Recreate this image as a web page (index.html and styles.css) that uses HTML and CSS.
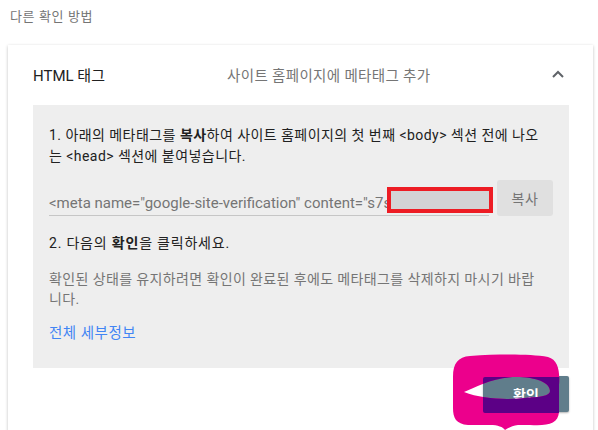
FILE: index.html
```html
<!DOCTYPE html>
<html lang="ko">
<head>
    <meta charset="UTF-8">
    <meta name="viewport" content="width=device-width, initial-scale=1.0">
    <title>다른 확인 방법</title>
    <link rel="stylesheet" href="styles.css">
</head>
<body>
    <div class="page">
      <div class="section-title">다른 확인 방법</div>

      <div class="card">
        <div class="card-header">
          <div class="method-name">HTML 태그</div>
          <div class="method-desc">사이트 홈페이지에 메타태그 추가</div>
          <svg class="chevron" width="12" height="8" viewBox="0 0 12 8">
            <path d="M1 7 L6 2 L11 7" fill="none" stroke="#5f6368" stroke-width="2"/>
          </svg>
        </div>

        <div class="panel">
          <p class="step">1. 아래의 메타태그를 <b>복사</b>하여 사이트 홈페이지의 첫 번째 &lt;body&gt; 섹션 전에 나오<br>는 &lt;head&gt; 섹션에 붙여넣습니다.</p>

          <div class="copy-row">
            <div class="meta-field">
              <span class="meta-text">&lt;meta name="google-site-verification" content="s7s</span>
              <div class="redact"></div>
            </div>
            <button class="copy-btn">복사</button>
          </div>

          <p class="step step-two">2. 다음의 <b>확인</b>을 클릭하세요.</p>
          <p class="note">확인된 상태를 유지하려면 확인이 완료된 후에도 메타태그를 삭제하지 마시기 바랍<br>니다.</p>
          <a class="details" href="#">전체 세부정보</a>
        </div>

        <div class="card-footer">
          <button class="verify-btn">확인</button>
        </div>
      </div>

      <!-- hand-drawn marker over the verify button -->
      <svg class="marker" width="130" height="88" viewBox="0 0 130 88">
        <defs>
          <clipPath id="blob">
            <path clip-rule="evenodd" d="M 30 11 C 60 9, 90 9, 108 12 C 118 15, 120 25, 119 40 L 119 67 C 118 79, 108 81, 90 80 L 78 80 C 72 81, 68 83, 65 85 C 63 82, 58 80, 50 80 L 28 80 C 16 79, 13 73, 13 63 L 13 32 C 13 18, 18 12, 30 11 Z M 24 47 C 36 42, 55 31, 80 32 C 100 33, 110 39, 110 46 C 110 51, 100 52, 85 53 C 65 55, 42 54, 24 47 Z"/>
          </clipPath>
        </defs>
        <path fill="#ec008c" fill-rule="evenodd" d="M 30 11 C 60 9, 90 9, 108 12 C 118 15, 120 25, 119 40 L 119 67 C 118 79, 108 81, 90 80 L 78 80 C 72 81, 68 83, 65 85 C 63 82, 58 80, 50 80 L 28 80 C 16 79, 13 73, 13 63 L 13 32 C 13 18, 18 12, 30 11 Z M 24 47 C 36 42, 55 31, 80 32 C 100 33, 110 39, 110 46 C 110 51, 100 52, 85 53 C 65 55, 42 54, 24 47 Z"/>
        <rect x="43" y="32" width="86" height="36" rx="2" fill="#5c0086" clip-path="url(#blob)"/>
      </svg>
    </div>
</body>
</html>
```

FILE: styles.css
```css
    body {
        margin: 0;
        background-color: #ffffff;
        font-family: Roboto, "Noto Sans CJK KR", sans-serif;
        color: #212121;
    }

    .page {
        position: relative;
        height: 430px;
        overflow: hidden;
        padding: 0 5px 0 8px;
    }

    .section-title {
        font-size: 13px;
        line-height: 20px;
        color: #757575;
        padding: 7px 0 0 2px;
        letter-spacing: 0.6px;
    }

    .card {
        margin-top: 18px;
        background: #fff;
        box-shadow: 0 1px 3px rgba(0, 0, 0, 0.25);
        padding: 0 24px 40px 25px;
    }

    .card-header {
        display: flex;
        align-items: center;
        height: 60px;
        padding-bottom: 2px;
        box-sizing: border-box;
    }

    .method-name {
        width: 194px;
        font-size: 15px;
        color: #212121;
    }

    .method-desc {
        flex: 1;
        font-size: 14.5px;
        letter-spacing: 0.35px;
        color: #757575;
    }

    .chevron {
        margin-right: 5px;
    }

    .panel {
        background-color: #eeeeee;
        padding: 20px 16px 24px 16px;
        font-size: 14px;
    }

    .step {
        margin: 0;
        line-height: 21px;
        white-space: nowrap;
        letter-spacing: 0.45px;
        color: #212121;
    }

    .step b {
        font-weight: 700;
    }

    .step-two {
        margin-top: 17px;
        letter-spacing: 0.8px;
    }

    .copy-row {
        display: flex;
        align-items: center;
        gap: 8px;
        margin-top: 13px;
    }

    .meta-field {
        position: relative;
        flex: 1;
        height: 36px;
        border-bottom: 1px solid #c6c6c6;
        box-sizing: border-box;
    }

    .meta-text {
        display: block;
        padding-top: 13px;
        font-size: 15px;
        line-height: 20px;
        color: #757575;
        white-space: nowrap;
        overflow: hidden;
    }

    /* redaction box covering the token */
    .redact {
        position: absolute;
        left: 338px;
        right: -4px;
        top: 7px;
        height: 26px;
        box-sizing: border-box;
        border: 4px solid #ed1c24;
        background-color: #d3d3d5;
    }

    .copy-btn {
        width: 56px;
        height: 36px;
        border: none;
        border-radius: 3px;
        background-color: #e0e0e0;
        color: #757575;
        font-family: Roboto, "Noto Sans CJK KR", sans-serif;
        font-size: 14px;
        letter-spacing: 0.5px;
    }

    .note {
        margin: 15px 0 0;
        line-height: 20px;
        color: #757575;
        letter-spacing: 0.38px;
        white-space: nowrap;
    }

    .details {
        display: block;
        margin-top: 15px;
        font-size: 14.5px;
        line-height: 20px;
        letter-spacing: 0.5px;
        color: #4285f4;
        text-decoration: none;
    }

    .card-footer {
        display: flex;
        justify-content: flex-end;
        padding-top: 8px;
    }

    .verify-btn {
        width: 86px;
        height: 36px;
        border: none;
        border-radius: 2px;
        background-color: #607d8b;
        color: #fff;
        font-family: Roboto, "Noto Sans CJK KR", sans-serif;
        font-size: 14px;
        font-weight: 700;
        box-shadow: 0 1px 2px rgba(0, 0, 0, 0.3);
    }

    .marker {
        position: absolute;
        left: 440px;
        top: 345px;
    }
```
